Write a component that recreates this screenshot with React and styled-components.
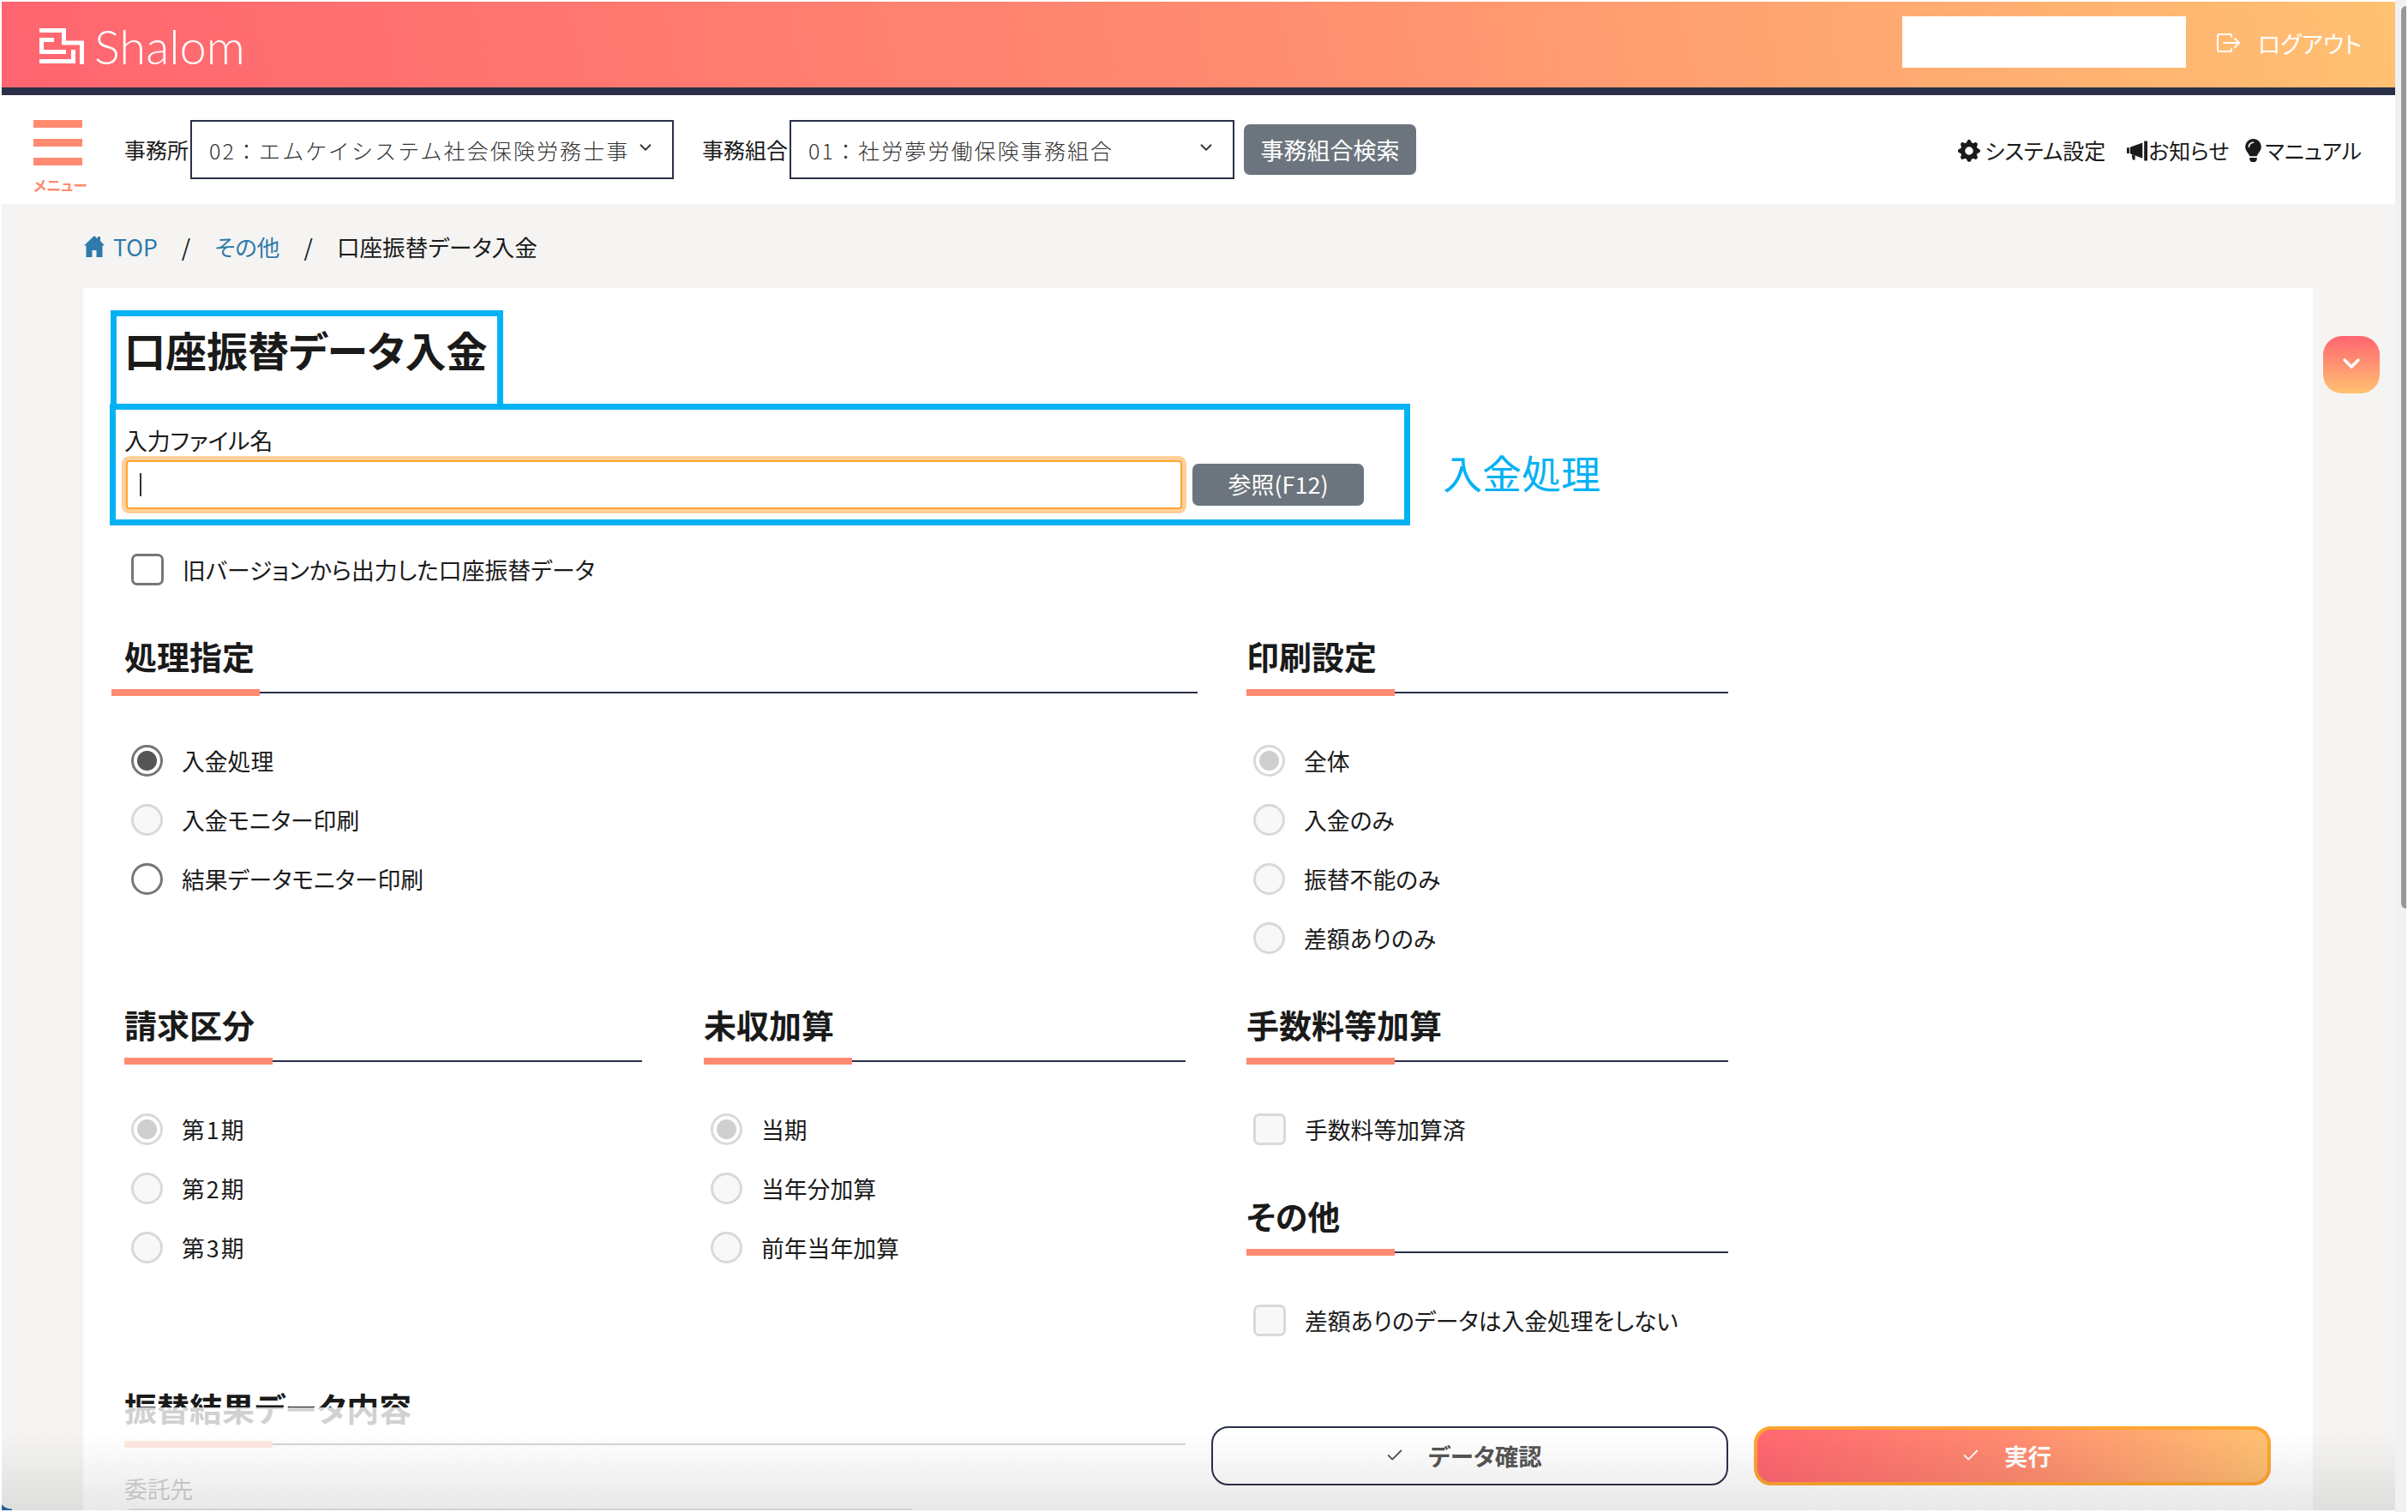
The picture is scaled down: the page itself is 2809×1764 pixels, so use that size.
import React from 'react';
import styled, { createGlobalStyle } from 'styled-components';
import { FaLightbulb } from 'react-icons/fa';
import { BsGearFill } from 'react-icons/bs';
import { ChevronDown, Check } from 'lucide-react';

const GlobalStyle = createGlobalStyle`
  html, body { margin: 0; padding: 0; background: #fff; }
  body {
    font-family: "Noto Sans CJK JP", "Noto Sans", sans-serif;
    color: #1a1a1a;
    font-feature-settings: "palt";
  }
  * { box-sizing: border-box; }
`;

const Stage = styled.div`
  width: 2809px;
  height: 1764px;
  display: flex;
  overflow: hidden;
  padding: 2px 0 2px 2px;
`;

const Win = styled.div`
  position: relative;
  width: 2792px;
  height: 100%;
  overflow: hidden;
  background: #f5f4f2;
`;

const Track = styled.div`
  width: 13px;
  margin-top: -2px;
  height: 1764px;
  background: #f1f1f1;
  padding: 7px 0 0 7px;
`;

const Thumb = styled.div`
  width: 6px;
  height: 1053px;
  background: #979797;
  border-radius: 6px 0 0 6px;
`;

const Header = styled.header`
  height: 100px;
  display: flex;
  align-items: center;
  padding: 0 39px 0 44px;
  background: linear-gradient(78deg, #ff6570 0%, #ff8a70 50%, #ffc172 100%);
`;

const HeaderBar = styled.div`
  height: 9px;
  background: #2a3048;
`;

const Logo = styled.div`
  display: flex;
  align-items: center;
  gap: 12px;
  margin-top: 4px;
  color: #fff;
  font-family: Lato, "Noto Sans", sans-serif;
  font-weight: 300;
  font-size: 56px;
  line-height: 1;
`;

const UserBox = styled.div`
  margin: 0 0 6px auto;
  width: 331px;
  height: 60px;
  background: #fff;
`;

const Logout = styled.div`
  display: flex;
  align-items: center;
  gap: 20px;
  margin: 0 0 4px 36px;
  color: #fff;
  font-size: 27px;
`;

const Nav = styled.nav`
  height: 127px;
  display: flex;
  align-items: center;
  padding: 0 39px 0 37px;
  background: #fff;
`;

const MenuButton = styled.div`
  align-self: flex-start;
  width: 64px;
  padding-top: 29px;
  margin-right: 42px;
  display: flex;
  flex-direction: column;
  gap: 13px;
  span {
    display: block;
    width: 57px;
    height: 9px;
    background: #ff8a70;
  }
  small {
    font-size: 17px;
    line-height: 20px;
    font-weight: 700;
    color: #ff8a70;
    white-space: nowrap;
  }
`;

const NavLabel = styled.label`
  font-size: 25px;
  line-height: 1;
  white-space: nowrap;
  margin-right: 2px;
`;

const Select = styled.div`
  width: ${(p) => p.$width}px;
  height: 69px;
  margin-right: ${(p) => p.$gap}px;
  display: flex;
  align-items: center;
  justify-content: space-between;
  padding: 0 20px 0 20px;
  border: 2px solid #2a3048;
  background: #fff;
  font-size: 25px;
  font-weight: 300;
  letter-spacing: 2.1px;
  color: #333;
  font-feature-settings: normal;
  white-space: nowrap;
  overflow: hidden;
  svg { flex: none; margin-top: -6px; color: #333; }
`;

const GreyButton = styled.button`
  border: 0;
  border-radius: 7px;
  background: #6c757d;
  color: #fff;
  font-family: inherit;
  font-feature-settings: inherit;
  font-size: 27px;
  padding: 0;
`;

const SearchButton = styled(GreyButton)`
  width: 201px;
  height: 59px;
`;

const NavLinks = styled.div`
  margin-left: auto;
  display: flex;
  align-items: center;
  gap: 27px;
`;

const NavLink = styled.a`
  display: flex;
  align-items: center;
  gap: ${(p) => p.$gap || 0}px;
  margin-left: ${(p) => p.$pull || 0}px;
  padding-top: 2px;
  font-size: 25px;
  line-height: 1;
  color: #1a1a1a;
`;

const Crumbs = styled.ol`
  height: 98px;
  margin: 0;
  padding: 0 0 0 96px;
  list-style: none;
  display: flex;
  align-items: center;
  font-size: 26.6px;
`;

const Crumb = styled.li`
  display: flex;
  align-items: center;
  gap: 10px;
  color: ${(p) => (p.$link ? '#2e7bab' : '#1a1a1a')};
`;

const CrumbSep = styled.li`
  margin: 0 28px;
  color: #1a1a1a;
`;

const Card = styled.main`
  margin-left: 95px;
  width: 2601px;
  min-height: 1500px;
  padding: 26px 0 0 32px;
  background: #fff;
`;

const TitleBox = styled.div`
  width: 458px;
  height: 116px;
  border: 7px solid #03b2f4;
  padding: 6px 0 0 9px;
`;

const Title = styled.h1`
  margin: 0;
  font-size: 48px;
  line-height: 64px;
  font-weight: 700;
  white-space: nowrap;
`;

const FileRow = styled.div`
  display: flex;
  align-items: center;
  margin: -7px 0 0 -1px;
`;

const FileBox = styled.div`
  width: 1517px;
  height: 142px;
  border: 7px solid #03b2f4;
  padding: 18px 0 0 10px;
`;

const FieldLabel = styled.div`
  font-size: 26.8px;
  line-height: 36px;
  margin-bottom: 5px;
`;

const FileControls = styled.div`
  display: flex;
  align-items: center;
  gap: 12px;
`;

const FileInput = styled.div`
  width: 1232px;
  height: 57px;
  margin-left: 2px;
  padding-left: 14px;
  display: flex;
  align-items: center;
  border: 2px solid #ffa530;
  border-radius: 4px;
  background: #fff;
  box-shadow: 0 0 0 5px #ffd09a;
`;

const Caret = styled.span`
  width: 2px;
  height: 27px;
  background: #333;
`;

const BrowseButton = styled(GreyButton)`
  width: 200px;
  height: 49px;
  margin-top: -1px;
  padding-bottom: 2px;
`;

const Annotation = styled.div`
  margin: 15px 0 0 38px;
  font-size: 46px;
  line-height: 1;
  color: #03b2f4;
`;

const Checkbox = styled.input.attrs({ type: 'checkbox' })`
  appearance: none;
  flex: none;
  width: 38px;
  height: 37px;
  margin: 0;
  border-radius: 7px;
  border: 3px solid ${(p) => (p.disabled ? '#d9d9d9' : '#767676')};
  background: ${(p) => (p.disabled ? '#f8f8f8' : '#fff')};
`;

const Radio = styled.input.attrs({ type: 'radio' })`
  appearance: none;
  flex: none;
  width: 37px;
  height: 37px;
  margin: 0;
  border-radius: 50%;
  border: 3px solid ${(p) => (p.disabled ? '#d9d9d9' : '#767676')};
  background: ${(p) => (p.disabled ? '#f8f8f8' : '#fff')};
  &:checked {
    background: radial-gradient(circle, ${(p) => (p.disabled ? '#cfcfcf' : '#555')} 11px, #fff 12px);
  }
`;

const Option = styled.label`
  height: 69px;
  display: flex;
  align-items: center;
  gap: 22px;
  font-size: 26.8px;
  letter-spacing: ${(p) => p.$tracking || 0}px;
  white-space: nowrap;
`;

const TopCheck = styled(Option)`
  height: 37px;
  margin: 33px 0 0 24px;
`;

const Columns = styled.div`
  display: grid;
  grid-template-columns: 1267px 562px;
  column-gap: 57px;
  row-gap: 44px;
  margin: 60px 0 0 1px;
`;

const TwoUp = styled.div`
  display: grid;
  grid-template-columns: 604px 562px;
  column-gap: 72px;
  padding-left: 15px;
`;

const Stack = styled.div`
  display: flex;
  flex-direction: column;
  gap: 44px;
`;

const Heading = styled.h2`
  margin: 0 0 17px;
  padding-left: ${(p) => p.$indent || 0}px;
  font-size: 38px;
  line-height: 44px;
  font-weight: 700;
  white-space: nowrap;
`;

const Rule = styled.div`
  display: flex;
  align-items: center;
  height: 8px;
  i { width: 173px; height: 8px; background: #ff8a70; }
  b { flex: 1; height: 2px; background: #2a3048; }
`;

const Options = styled.div`
  margin-top: 41px;
  padding-left: ${(p) => p.$indent || 8}px;
`;

const ResultSection = styled.div`
  grid-column: 1 / -1;
  margin-top: 1px;
`;

const ResultInput = styled.div`
  width: 920px;
  height: 60px;
  margin-left: 2px;
  border: 2px solid #888;
  border-radius: 6px;
`;

const ResultField = styled.div`
  margin-top: 30px;
`;

const Veil = styled.div`
  position: absolute;
  left: 95px;
  top: 1640px;
  bottom: 0;
  width: 2601px;
  padding: 22px 49px 0 0;
  display: flex;
  justify-content: flex-end;
  gap: 30px;
  background: rgba(255, 255, 255, 0.8);
`;

const ActionButton = styled.button`
  width: 603px;
  height: 69px;
  display: flex;
  align-items: center;
  justify-content: center;
  gap: 28px;
  padding: 0 14px 2px 0;
  border-radius: 20px;
  font-family: inherit;
  font-feature-settings: inherit;
  font-size: 27.5px;
  font-weight: 700;
  color: ${(p) => (p.$primary ? '#fff' : '#555')};
  border: ${(p) => (p.$primary ? '4px solid #ffa530' : '2px solid #2a3048')};
  background: ${(p) => (p.$primary ? 'linear-gradient(70deg, #ff6570 0%, #ff8a70 50%, #ffc172 100%)' : '#fff')};
`;

const Shade = styled.div`
  position: absolute;
  left: 0;
  right: 0;
  bottom: 0;
  height: 90px;
  pointer-events: none;
  background: linear-gradient(to bottom, rgba(0, 0, 0, 0), rgba(0, 0, 0, 0.09));
`;

const Corner = styled.div`
  position: absolute;
  left: -2px;
  bottom: 0;
  width: 14px;
  height: 18px;
  background: radial-gradient(circle at 100% 0, transparent 16px, #1f5f9c 17px);
`;

const ScrollButton = styled.div`
  position: absolute;
  left: 2708px;
  top: 390px;
  width: 66px;
  height: 67px;
  display: flex;
  align-items: center;
  justify-content: center;
  border-radius: 22px;
  color: #fff;
  background: linear-gradient(to bottom, #ff6570, #ffc172);
  svg { margin-top: -3px; }
`;

const ShalomMark = () => (
  <svg width="52" height="42" viewBox="0 0 52 42" fill="none" stroke="#fff" strokeWidth="5">
    <path d="M0 2.5H28.5V17H49.5V42" />
    <path d="M17 13.5H2.5V27.5H31" />
    <path d="M0 38.5H39.5V25" />
  </svg>
);

const LogoutIcon = () => (
  <svg width="28" height="22" viewBox="0 0 28 22" fill="none" stroke="#fff" strokeWidth="2" strokeLinecap="round" strokeLinejoin="round">
    <path d="M17 4V2.5A1.5 1.5 0 0 0 15.5 1H3A2 2 0 0 0 1 3V19A2 2 0 0 0 3 21H15.5A1.5 1.5 0 0 0 17 19.5V18" />
    <path d="M8 11H26M21 6L26 11L21 16" />
  </svg>
);

const HomeIcon = () => (
  <svg width="24" height="25" viewBox="0 0 24 25" fill="#2e7bab">
    <path d="M12 0L16 3.5V1H19V6L24 11.5H21.5V25H14.5V17H9.5V25H2.5V11.5H0Z" />
  </svg>
);

const HornIcon = () => (
  <svg width="25" height="24" viewBox="0 0 26 24" fill="#1a1a1a">
    <path d="M0 8H3V15H0ZM4 7.5L19 2V21L4 15.5ZM21 0H25V24H21ZM6 16.5L10 18V23H7Z" />
  </svg>
);

const Section = ({ title, indent, children }) => (
  <section>
    <Heading $indent={indent}>{title}</Heading>
    <Rule><i /><b /></Rule>
    {children}
  </section>
);

const RadioList = ({ name, items, indent, tracking }) => (
  <Options $indent={indent}>
    {items.map((item, id) => (
      <Option key={id} $tracking={tracking}>
        <Radio name={name} disabled={item.off} defaultChecked={item.on} />
        {item.text}
      </Option>
    ))}
  </Options>
);

const proc = [
  { text: '入金処理', on: true },
  { text: '入金モニター印刷', off: true },
  { text: '結果データモニター印刷' },
];
const print = [
  { text: '全体', on: true, off: true },
  { text: '入金のみ', off: true },
  { text: '振替不能のみ', off: true },
  { text: '差額ありのみ', off: true },
];
const bill = [
  { text: '第1期', on: true, off: true },
  { text: '第2期', off: true },
  { text: '第3期', off: true },
];
const unpaid = [
  { text: '当期', on: true, off: true },
  { text: '当年分加算', off: true },
  { text: '前年当年加算', off: true },
];

export default function App() {
  return (
    <Stage>
      <GlobalStyle />
      <Win>
        <Header>
          <Logo><ShalomMark />Shalom</Logo>
          <UserBox />
          <Logout><LogoutIcon />ログアウト</Logout>
        </Header>
        <HeaderBar />
        <Nav>
          <MenuButton><span /><span /><span /><small>メニュー</small></MenuButton>
          <NavLabel>事務所</NavLabel>
          <Select $width={564} $gap={33}>02：エムケイシステム社会保険労務士事<ChevronDown size={22} /></Select>
          <NavLabel>事務組合</NavLabel>
          <Select $width={519} $gap={11}>01：社労夢労働保険事務組合<ChevronDown size={22} /></Select>
          <SearchButton>事務組合検索</SearchButton>
          <NavLinks>
            <NavLink $gap={5}><BsGearFill size={26} />システム設定</NavLink>
            <NavLink $pull={-2}><HornIcon />お知らせ</NavLink>
            <NavLink $pull={-12}><FaLightbulb size={27} />マニュアル</NavLink>
          </NavLinks>
        </Nav>
        <Crumbs>
          <Crumb $link><HomeIcon />TOP</Crumb>
          <CrumbSep>/</CrumbSep>
          <Crumb $link>その他</Crumb>
          <CrumbSep>/</CrumbSep>
          <Crumb>口座振替データ入金</Crumb>
        </Crumbs>
        <Card>
          <TitleBox><Title>口座振替データ入金</Title></TitleBox>
          <FileRow>
            <FileBox>
              <FieldLabel>入力ファイル名</FieldLabel>
              <FileControls>
                <FileInput><Caret /></FileInput>
                <BrowseButton>参照(F12)</BrowseButton>
              </FileControls>
            </FileBox>
            <Annotation>入金処理</Annotation>
          </FileRow>
          <TopCheck><Checkbox />旧バージョンから出力した口座振替データ</TopCheck>
          <Columns>
            <Section title="処理指定" indent={15}>
              <RadioList name="proc" items={proc} indent={23} />
            </Section>
            <Section title="印刷設定">
              <RadioList name="print" items={print} />
            </Section>
            <TwoUp>
              <Section title="請求区分">
                <RadioList name="bill" items={bill} tracking={2} />
              </Section>
              <Section title="未収加算">
                <RadioList name="unpaid" items={unpaid} />
              </Section>
            </TwoUp>
            <Stack>
              <Section title="手数料等加算">
                <Options><Option><Checkbox disabled />手数料等加算済</Option></Options>
              </Section>
              <Section title="その他">
                <Options><Option><Checkbox disabled />差額ありのデータは入金処理をしない</Option></Options>
              </Section>
            </Stack>
            <TwoUp>
              <ResultSection>
                <Heading>振替結果データ内容</Heading>
                <Rule><i /><b /></Rule>
                <ResultField>
                  <FieldLabel>委託先</FieldLabel>
                  <ResultInput />
                </ResultField>
              </ResultSection>
            </TwoUp>
          </Columns>
        </Card>
        <ScrollButton><ChevronDown size={32} strokeWidth={2.5} /></ScrollButton>
        <Veil>
          <ActionButton><Check size={22} />データ確認</ActionButton>
          <ActionButton $primary><Check size={22} />実行</ActionButton>
        </Veil>
        <Shade />
        <Corner />
      </Win>
      <Track><Thumb /></Track>
    </Stage>
  );
}
